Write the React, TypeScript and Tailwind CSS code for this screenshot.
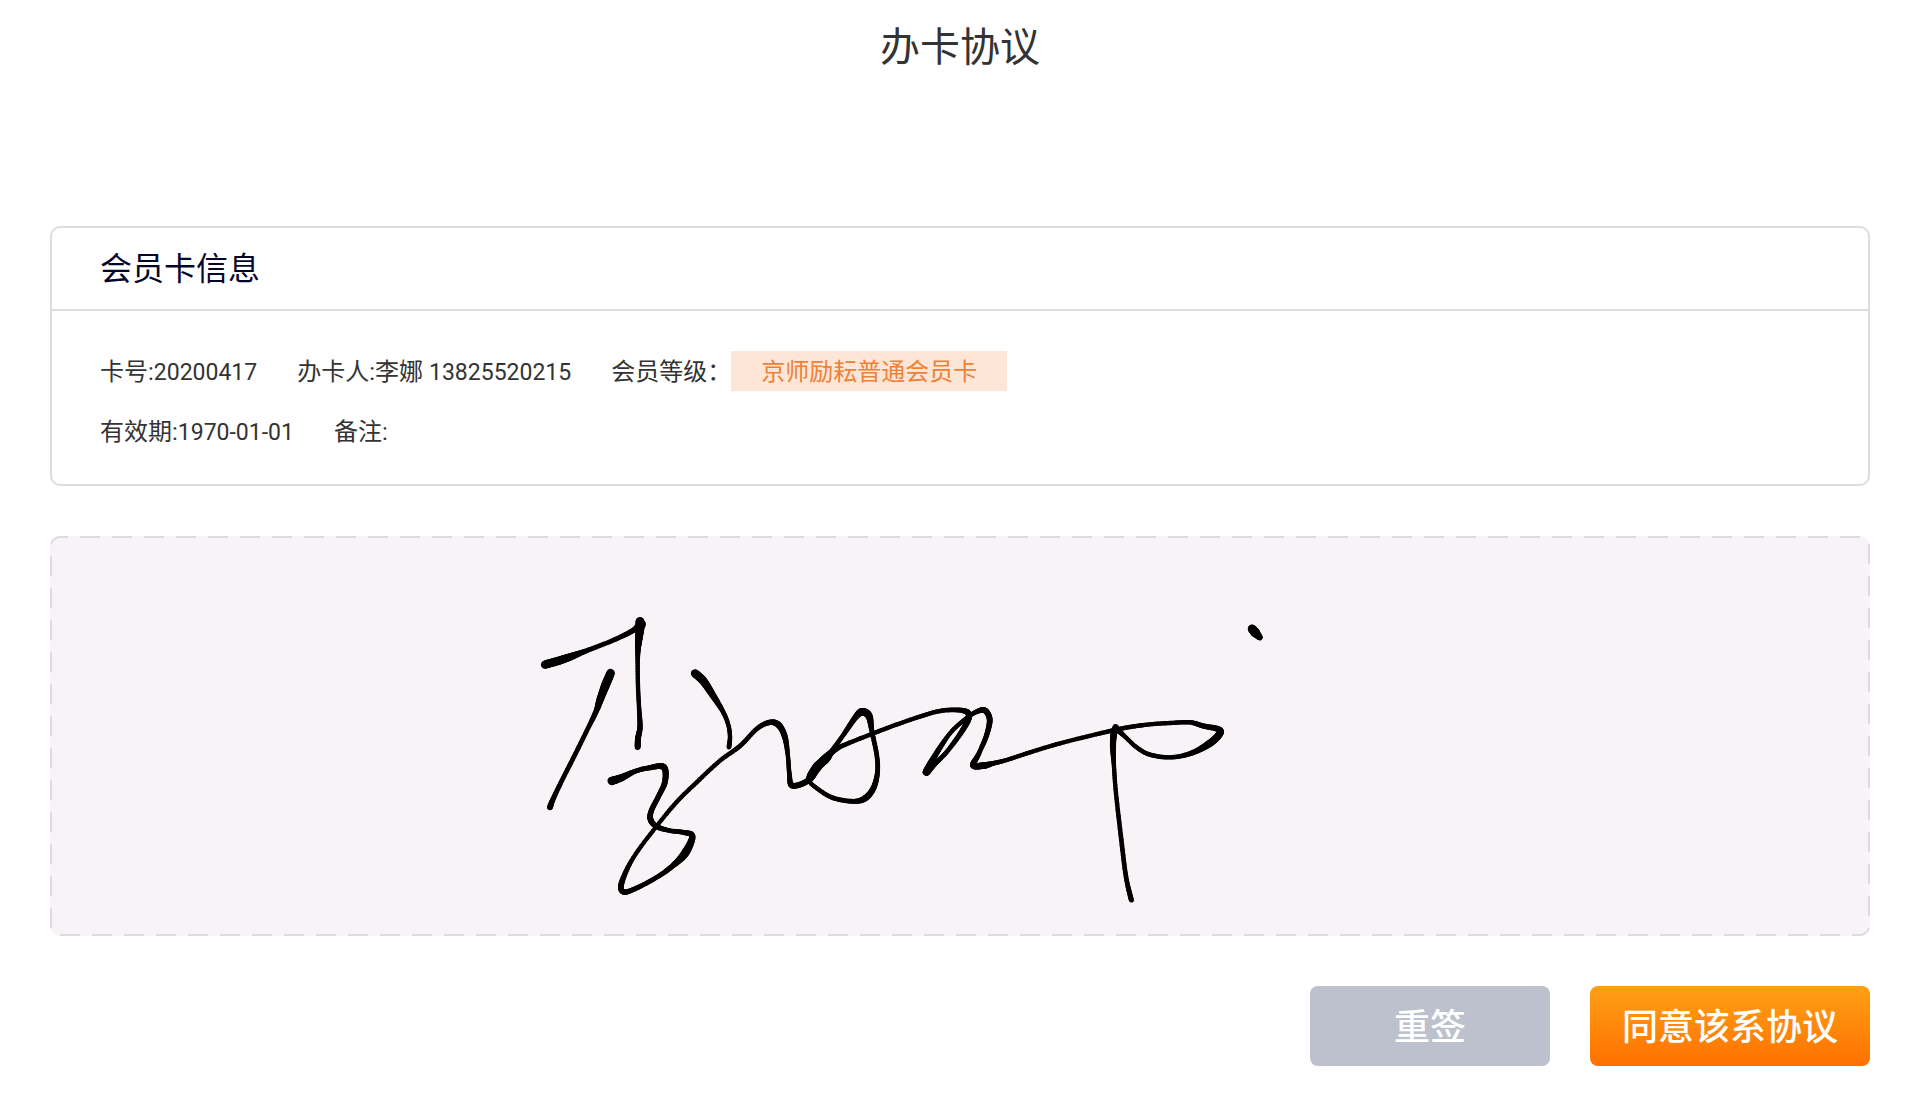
type Sample = [x: number, y: number, width: number];

// Pen samples, in thirds of a pixel for x and y; width is in pixels.
const strokes: Sample[][] = [
  [[75, 194, 8], [120, 181, 8], [155, 169, 7], [200, 152, 4.5], [260, 129, 4.2], [310, 107, 4.5], [345, 88, 5], [364, 73, 9]],
  [[360, 64, 8.5], [360, 85, 8.5], [356, 120, 7], [354, 150, 5], [353, 190, 4], [354, 260, 4], [357, 320, 4], [360, 380, 5], [354, 415, 5.5], [353, 441, 5.5]],
  [[272, 219, 8], [256, 257, 8.5], [240, 300, 7], [228, 335, 5], [200, 393, 4.2], [162, 470, 4.3], [125, 543, 4.3], [98, 600, 4.8], [90, 622, 5.5]],
  [[525, 220, 8], [550, 243, 8], [578, 285, 6.5], [610, 337, 4.3], [625, 375, 4], [630, 410, 4], [627, 441, 4.5]],
  [
    [275, 543, 8], [305, 533, 7], [345, 514, 4.5], [385, 504, 4.5], [431, 501, 6], [435, 545, 5.5], [415, 590, 4.8],
    [393, 635, 5], [393, 662, 5.5], [413, 681, 5], [450, 692, 4.2], [490, 697, 4.5], [517, 709, 5.5], [495, 760, 8],
    [455, 800, 5], [410, 832, 4.3], [350, 864, 4.5], [311, 876, 5], [305, 848, 5.5], [340, 773, 4], [408, 681, 3.8],
    [470, 606, 4], [530, 547, 4], [600, 482, 4], [660, 438, 4.3], [711, 386, 4.3], [750, 367, 5], [777, 376, 6],
    [795, 412, 5.5], [804, 470, 4], [808, 520, 4.2], [817, 557, 5.5], [865, 541, 5.5], [892, 500, 9], [920, 475, 7.5],
    [940, 447, 4.5], [970, 405, 4.2], [1008, 350, 5.5], [1027, 336, 7.5], [1047, 348, 7], [1056, 395, 4.5],
    [1071, 470, 4.3], [1072, 520, 4.5], [1060, 565, 5.5], [1035, 595, 6], [1000, 604, 4.5], [940, 594, 4.3],
    [895, 568, 4], [867, 540, 4], [885, 508, 8], [920, 470, 7], [960, 441, 4.3], [1040, 408, 4], [1110, 381, 4],
    [1190, 353, 4], [1265, 332, 4.2], [1330, 332, 4.8], [1347, 350, 6], [1325, 395, 5], [1280, 456, 4.2],
    [1245, 491, 4.5], [1219, 516, 7], [1245, 467, 5.5], [1290, 400, 4], [1335, 358, 4], [1368, 336, 4.2],
    [1394, 331, 5.5], [1409, 358, 5.5], [1400, 405, 4.8], [1377, 460, 4.3], [1360, 496, 6], [1394, 496, 6.5],
    [1420, 490, 4.5], [1460, 480, 4], [1530, 457, 4], [1620, 430, 4], [1720, 405, 4], [1780, 391, 4.2],
    [1830, 381, 4.2], [1890, 373, 4], [1950, 369, 4], [2010, 367, 4.2], [2050, 378, 4.8], [2096, 388, 5.5],
    [2097, 404, 7], [2065, 433, 7], [2010, 461, 4.8], [1950, 472, 4], [1890, 464, 4.2], [1850, 442, 4],
    [1811, 406, 4], [1789, 386, 6],
  ],
  [[1787, 382, 6], [1781, 405, 6], [1779, 440, 5.8], [1782, 500, 4], [1788, 580, 4], [1804, 720, 4.3], [1818, 830, 4.3], [1834, 900, 4.8]],
  [[2196, 86, 8], [2206, 98, 9], [2220, 113, 5]],
];

function spline(a: number, b: number, c: number, d: number, t: number) {
  return 0.5 * (2 * b + (c - a) * t + (2 * a - 5 * b + 4 * c - d) * t * t + (3 * b - a - 3 * c + d) * t * t * t);
}

function smooth(samples: Sample[]): Sample[] {
  const out: Sample[] = [samples[0]];
  const steps = 8;
  for (let i = 0; i < samples.length - 1; i++) {
    const p0 = samples[Math.max(i - 1, 0)];
    const p1 = samples[i];
    const p2 = samples[i + 1];
    const p3 = samples[Math.min(i + 2, samples.length - 1)];
    for (let s = 1; s <= steps; s++) {
      const t = s / steps;
      out.push([
        spline(p0[0], p1[0], p2[0], p3[0], t),
        spline(p0[1], p1[1], p2[1], p3[1], t),
        p1[2] + (p2[2] - p1[2]) * t,
      ]);
    }
  }
  return out;
}

function Signature() {
  return (
    <svg viewBox="0 0 1820 400" className="h-full w-full" role="img" aria-label="李娜">
      <g transform="translate(470 64) scale(0.33333)" stroke="#000" strokeLinecap="round">
        {strokes.map((stroke, k) =>
          smooth(stroke).map((p, i, all) =>
            i === 0 ? null : (
              <line key={`${k}-${i}`} x1={all[i - 1][0]} y1={all[i - 1][1]} x2={p[0]} y2={p[1]} strokeWidth={p[2] * 3 + 1} />
            ),
          ),
        )}
      </g>
    </svg>
  );
}

function Field({ label, name, number }: { label: string; name?: string; number?: string }) {
  return (
    <div className="flex">
      <dt>{label}:</dt>
      <dd>
        {name && `${name} `}
        <span className="text-[23px]">{number}</span>
      </dd>
    </div>
  );
}

export default function App() {
  return (
    <main className="min-h-screen bg-white px-[50px] pb-[50px] font-['Roboto','Noto_Sans_CJK_SC',sans-serif] text-[#333333]">
      <h1 className="pt-[18px] text-center text-[40px] leading-[60px]">办卡协议</h1>

      <section className="mt-[148px] rounded-[10px] border-2 border-[#dddddd]">
        <h2 className="border-b-2 border-[#dddddd] px-12 pt-[21px] pb-[19px] text-[32px] leading-[41px] text-[#05052b]">
          会员卡信息
        </h2>
        <dl className="flex flex-col gap-[17px] px-12 pt-10 pb-[30px] text-2xl leading-[42px]">
          <div className="flex flex-wrap gap-x-10">
            <Field label="卡号" number="20200417" />
            <Field label="办卡人" name="李娜" number="13825520215" />
            <div className="flex">
              <dt>会员等级：</dt>
              <dd className="h-10 bg-[#fde6d6] px-[30px] text-[#ee8137]">京师励耘普通会员卡</dd>
            </div>
          </div>
          <div className="flex flex-wrap gap-x-10">
            <Field label="有效期" number="1970-01-01" />
            <Field label="备注" />
          </div>
        </dl>
      </section>

      <section className="relative mt-[50px] h-[400px] rounded-[10px] bg-[#f7f3f7]">
        <svg className="pointer-events-none absolute inset-0 h-full w-full" aria-hidden="true">
          <rect
            x="1"
            y="1"
            rx="9"
            className="h-[calc(100%-2px)] w-[calc(100%-2px)] fill-none stroke-[#dddbdf] stroke-2"
            strokeDasharray="20 12"
            strokeDashoffset="12"
          />
        </svg>
        <Signature />
      </section>

      <div className="mt-[50px] flex justify-end gap-10 text-4xl font-medium text-white">
        <button type="button" className="h-20 w-60 rounded-lg bg-[#bdc1ce] pt-1">
          重签
        </button>
        <button type="button" className="h-20 w-[280px] rounded-lg bg-linear-to-b from-[#ff9f15] to-[#ff7000] pt-1">
          同意该系协议
        </button>
      </div>
    </main>
  );
}
